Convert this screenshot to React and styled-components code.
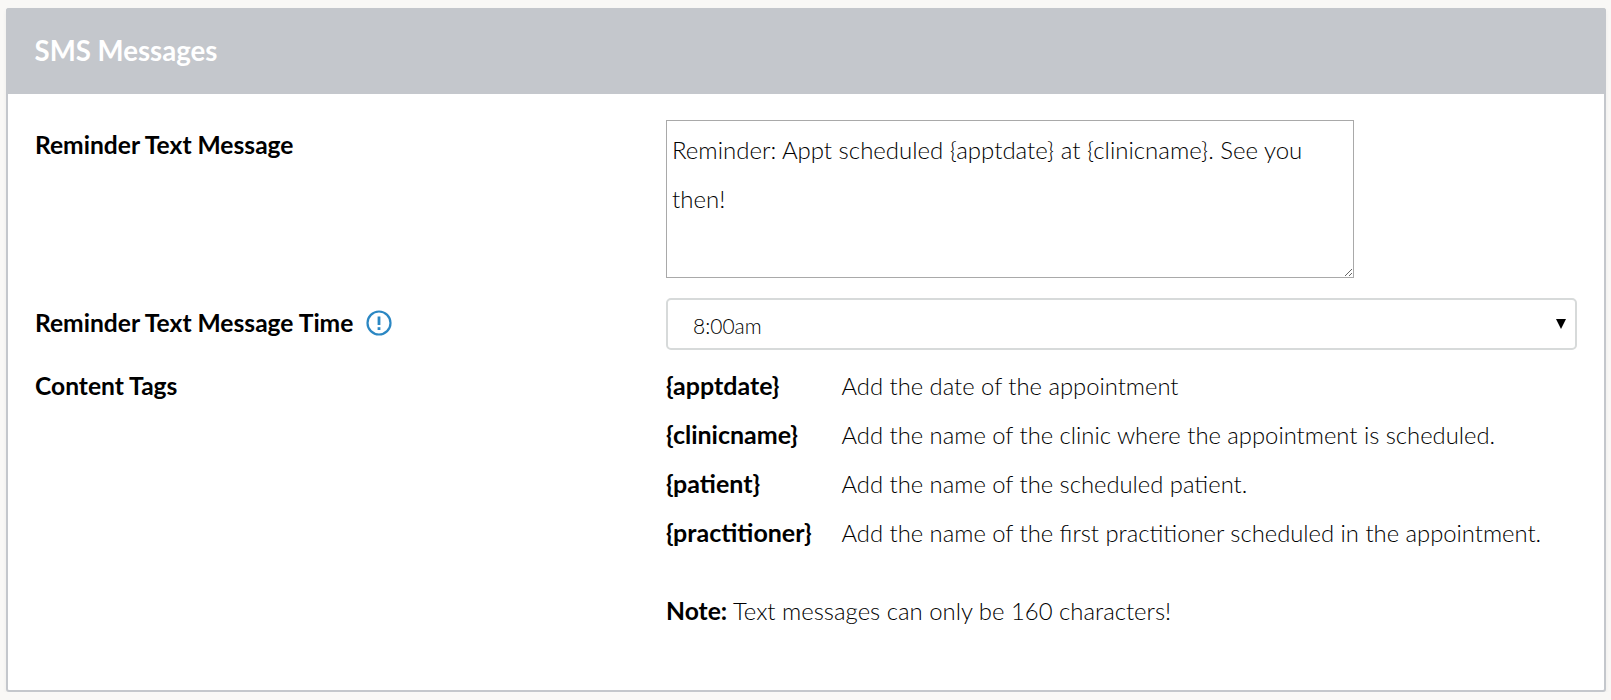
import React from "react";
import styled, { createGlobalStyle } from "styled-components";

const Global = createGlobalStyle`
  html, body { margin: 0; padding: 0; background: #f9f8f6; }
  body { font-family: Lato, "Liberation Sans", sans-serif; color: #000; }
`;
const Page = styled.div`
  padding: 8px 5px 0 6px;
`;
const Panel = styled.section`
  height: 684px;
  box-sizing: border-box;
  background: #fff;
  border: 2px solid #c4c7cc;
  border-radius: 3px;
  box-shadow: 0 2px 4px rgba(0, 0, 0, 0.05);
`;
const Header = styled.header`
  height: 86px;
  background: #c4c7cc;
  margin: -2px -2px 0;
  padding: 0 28.5px;
  display: flex;
  align-items: center;
  border-radius: 3px 3px 0 0;
`;
const Title = styled.h2`
  margin: 0;
  color: #fff;
  font-size: 27.6px;
  font-weight: 700;
  line-height: 30px;
`;
const Body = styled.div`
  padding: 26px 27px 0;
  display: grid;
  grid-template-columns: 631px 1fr;
  row-gap: 20px;
`;
const Label = styled.div`
  font-size: 24.6px;
  font-weight: 700;
  line-height: 30px;
  display: flex;
  align-items: center;
  gap: 13px;
  padding-bottom: 2px;
`;
const TopLabel = styled(Label)`
  align-self: start;
  padding-top: ${(p) => p.$top || 0}px;
`;
const Area = styled.textarea`
  display: block;
  box-sizing: border-box;
  width: 688px;
  height: 158px;
  padding: 4px 5px;
  border: 1px solid #a9a9a9;
  border-radius: 0;
  font: 300 24px/49px Lato, sans-serif;
  color: #000;
  background: #fff;
  outline: none;
  overflow: hidden;
`;
const SelectWrap = styled.div`
  position: relative;
  height: 52px;
`;
const Select = styled.select`
  appearance: none;
  display: block;
  box-sizing: border-box;
  width: 100%;
  height: 100%;
  padding: 2px 0 0 25px;
  border: 2px solid #d7dada;
  border-radius: 5px;
  background: #fff;
  font: 300 21px Lato, sans-serif;
  color: #000;
`;
const Arrow = styled.svg`
  position: absolute;
  right: 11px;
  top: 21px;
  width: 10px;
  height: 10px;
  pointer-events: none;
`;
const Tags = styled.div`
  display: grid;
  grid-template-columns: 175.5px 1fr;
  row-gap: 19px;
  margin-top: 1px;
`;
const Tag = styled.div`
  font-size: 25px;
  font-weight: 700;
  line-height: 28px;
`;
const Desc = styled.div`
  font-size: 23.8px;
  font-weight: 300;
  line-height: 30px;
`;
const Note = styled.p`
  margin: 48px 0 0;
  font-size: 23.9px;
  font-weight: 300;
  line-height: 30px;
  & > strong { font-size: 24.7px; font-weight: 700; }
`;
const tags = [
  ["{apptdate}", "Add the date of the appointment"],
  ["{clinicname}", "Add the name of the clinic where the appointment is scheduled."],
  ["{patient}", "Add the name of the scheduled patient."],
  ["{practitioner}", "Add the name of the first practitioner scheduled in the appointment."],
];
const Info = () => (
  <svg width="26" height="26" viewBox="0 0 26 26" fill="none">
    <circle cx="13" cy="13" r="11.5" stroke="#2b87c3" strokeWidth="2.2" />
    <path d="M13 6.5v8.5" stroke="#2b87c3" strokeWidth="2.8" />
    <path d="M13 17.2v2.8" stroke="#2b87c3" strokeWidth="2.8" />
  </svg>
);
export default function App() {
  return (
    <Page>
      <Global />
      <Panel>
        <Header><Title>SMS Messages</Title></Header>
        <Body>
          <TopLabel $top={10}>Reminder Text Message</TopLabel>
          <Area readOnly defaultValue="Reminder: Appt scheduled {apptdate} at {clinicname}. See you then!" />
          <Label>Reminder Text Message Time <Info /></Label>
          <SelectWrap>
            <Select defaultValue="8:00am"><option>8:00am</option></Select>
            <Arrow viewBox="0 0 10 10"><path d="M0 0h10L5 10z" fill="#000" /></Arrow>
          </SelectWrap>
          <TopLabel $top={1}>Content Tags</TopLabel>
          <div>
            <Tags>
              {tags.map(([t, d]) => (
                <React.Fragment key={t}>
                  <Tag>{t}</Tag>
                  <Desc>{d}</Desc>
                </React.Fragment>
              ))}
            </Tags>
            <Note><strong>Note:</strong> Text messages can only be 160 characters!</Note>
          </div>
        </Body>
      </Panel>
    </Page>
  );
}
